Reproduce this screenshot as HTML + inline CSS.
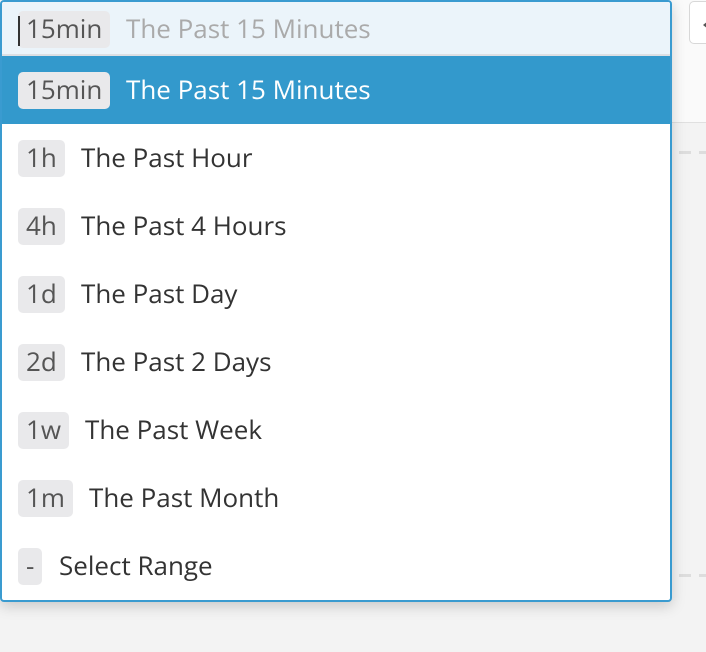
<!DOCTYPE html>
<html><head><style>
*{margin:0;padding:0;box-sizing:border-box}
body{width:706px;height:652px;overflow:hidden;background:#f3f3f3;position:relative;font-family:"Open Sans","Liberation Sans","DejaVu Sans",sans-serif}
.top{position:absolute;left:0;top:0;width:706px;height:123px;background:#fafafa;border-bottom:1px solid #e0e0e0}
.btn{position:absolute;left:689px;top:1px;width:40px;height:43px;border:1px solid #d8d8d8;border-radius:5px;background:#fff}
.btn:after{content:"";position:absolute;left:13px;top:19px;border:4px solid transparent;border-right:5px solid #555;border-left:0}
.dash{position:absolute;left:679px;width:30px;height:3px;background:repeating-linear-gradient(90deg,#ddd 0 12px,transparent 12px 20px)}
.dd{position:absolute;left:0;top:0;width:672px;height:602px;border:2px solid #3a9bd0;border-radius:4px;background:#fff;box-shadow:0 4px 14px rgba(0,0,0,.18);overflow:hidden}
.inp{position:absolute;left:0;top:0;width:668px;height:54px;background:#ebf4fa;border-bottom:2px solid #dcdfe3}
.row{position:absolute;left:0;width:668px;height:68px}
.hl{background:#3399cc}
.b{position:absolute;left:16px;height:37px;line-height:35px;background:#e9e9eb;border-radius:5px;color:#555;font-size:26px;padding:0 8px}
.t{position:absolute;font-size:26px;color:#333;line-height:35px}
.caret{position:absolute;left:16px;top:14px;width:2px;height:30px;background:#333}
</style></head><body>
<div class="top"></div>
<div class="btn"></div>
<div class="dash" style="top:151px"></div>
<div class="dash" style="top:574px"></div>
<div class="dd">
 <div class="inp">
  <div class="b" style="top:9px">15min</div>
  <div class="caret"></div>
  <div class="t" style="left:124px;top:9px;color:#aaa">The Past 15 Minutes</div>
 </div>
 <div class="row hl" style="top:54px"><div class="b" style="top:16px">15min</div><div class="t" style="left:124px;top:16px;color:#fff">The Past 15 Minutes</div></div>
 <div class="row" style="top:122px"><div class="b" style="top:16px">1h</div><div class="t" style="left:79px;top:16px">The Past Hour</div></div>
 <div class="row" style="top:190px"><div class="b" style="top:16px">4h</div><div class="t" style="left:79px;top:16px">The Past 4 Hours</div></div>
 <div class="row" style="top:258px"><div class="b" style="top:16px">1d</div><div class="t" style="left:79px;top:16px">The Past Day</div></div>
 <div class="row" style="top:326px"><div class="b" style="top:16px">2d</div><div class="t" style="left:79px;top:16px">The Past 2 Days</div></div>
 <div class="row" style="top:394px"><div class="b" style="top:16px">1w</div><div class="t" style="left:83px;top:16px">The Past Week</div></div>
 <div class="row" style="top:462px"><div class="b" style="top:16px">1m</div><div class="t" style="left:87px;top:16px">The Past Month</div></div>
 <div class="row" style="top:530px"><div class="b" style="top:16px">-</div><div class="t" style="left:57px;top:16px">Select Range</div></div>
</div>
</body></html>
